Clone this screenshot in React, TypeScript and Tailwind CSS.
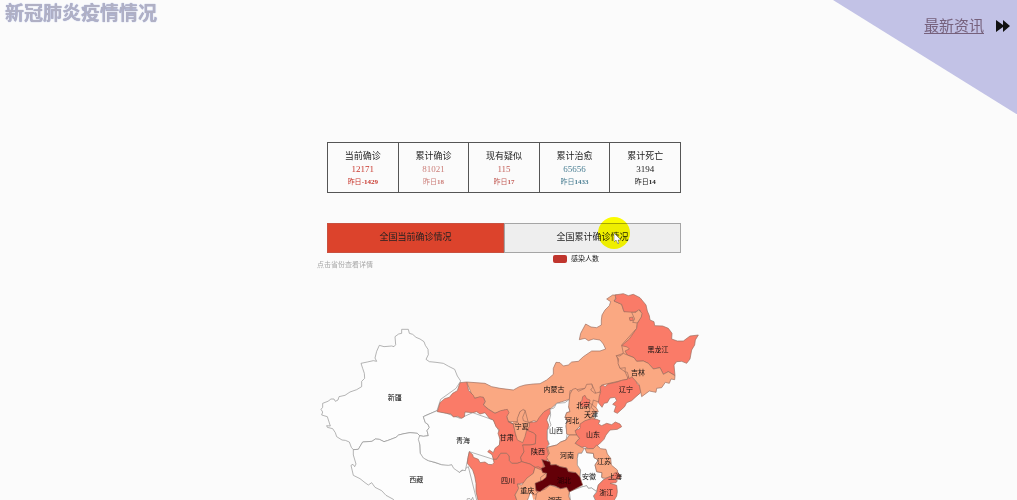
import { useState } from 'react';

const stats = [
  { label: '当前确诊', value: '12171', diff: '-1429', color: 'text-[#c8372d]' },
  { label: '累计确诊', value: '81021', diff: '18', color: 'text-[#cc7f7a]' },
  { label: '现有疑似', value: '115', diff: '17', color: 'text-[#c4605a]' },
  { label: '累计治愈', value: '65656', diff: '1433', color: 'text-[#4f8296]' },
  { label: '累计死亡', value: '3194', diff: '14', color: 'text-[#222222]' },
];

const tabs = ['全国当前确诊情况', '全国累计确诊情况'];

const NONE = '#fdfdfd';
const LOW = '#faa882';
const MID = '#fa7b68';
const HIGH = '#640008';

// Filled first, so that no background shows between neighbouring provinces
const underlay = [
  { fill: LOW, d: 'M1835 1045L1905 985 1950 1090 1905 1145 1810 1155Z' },
  { fill: LOW, d: 'M1705 1175L1775 1155 1810 1158 1798 1190 1785 1240 1740 1270 1700 1262Z' },
  { fill: LOW, d: 'M1635 1340L1745 1345 1740 1420 1650 1400Z' },
  { fill: LOW, d: 'M1535 1225L1590 1225 1600 1280 1540 1290Z' },
  { fill: MID, d: 'M1540 1300L1585 1268 1640 1270 1640 1390 1625 1425 1585 1450 1540 1400Z' },
  { fill: LOW, d: 'M1610 1412L1640 1410 1640 1440 1650 1480 1600 1500 1590 1460Z' },
];

// Outlines come in four map sheets, each with its own origin
const west = [
  {
    fill: NONE,
    d: 'M275 28H295L298 40 308 43 318 52 330 57 342 65 346 76 354 88 355 104 348 118 358 125 378 127 400 130 416 139 434 148 442 168 452 183 438 205 392 238 381 272 350 285 340 290 346 308 353 312 358 322 351 332 355 347 340 349 329 347 322 340 300 338 282 341 266 345 258 352 232 362 222 365 208 358 196 357 186 364 158 366 145 388 130 389 124 382 118 366 106 361 96 360 80 350 76 338 68 326 52 322 50 317 61 318 52 290 35 285 38 276 33 268 38 262 38 250 56 243 62 237 72 237 76 244 84 240 87 230 105 226 120 216 140 209 155 200 155 184 164 175 163 160 158 145 153 130 172 126 190 122 200 124 195 114 200 94 208 76 222 80 245 78 252 80 257 74 255 50 266 42 275 40Z',
  },
  {
    fill: NONE,
    d: 'M130 389L145 388 158 366 186 364 196 357 208 358 222 365 232 362 258 352 266 345 282 341 300 338 322 340 329 347 330 378 331 400 350 420 395 434 425 434 448 457 475 440 505 560H270L250 538 228 526 215 512 195 502 185 488 175 495 165 488 150 476 130 466 123 436 129 433 134 440 138 432 130 405Z',
  },
];

const north = [
  {
    fill: LOW,
    d: 'M1400 1146L1455 1150 1475 1160 1500 1165 1540 1170 1558 1160 1575 1155 1600 1152 1620 1151 1640 1140 1660 1123 1660 1105 1668 1087 1680 1088 1690 1098 1705 1095 1715 1086 1735 1084 1750 1070 1775 1053 1800 1053 1817 1047 1810 1032 1800 1020 1780 1017 1765 1022 1755 1015 1738 1019 1742 1000 1757 972 1773 981 1790 983 1804 975 1804 960 1806 945 1815 930 1828 917 1832 905 1820 897 1838 885H1852L1842 903 1865 913 1872 935 1920 930 1922 950 1912 970 1910 985 1865 1035 1870 1060 1850 1067 1860 1105 1875 1115 1885 1137 1805 1155 1800 1175 1790 1185 1775 1152 1755 1165 1710 1172 1708 1198 1670 1210 1650 1228 1635 1240 1625 1257 1610 1265 1602 1262 1585 1268 1575 1230 1560 1235 1552 1265 1525 1265 1515 1230 1485 1240 1465 1227 1450 1215 1456 1205 1450 1192 1420 1195Z',
  },
  {
    fill: NONE,
    d: 'M1311 1232L1270 1250 1276 1268 1283 1272 1288 1282 1281 1292 1285 1307 1270 1309 1259 1307 1255 1318 1260 1335 1261 1360 1270 1374 1285 1382 1305 1387 1325 1394 1345 1396 1355 1394 1361 1405 1378 1417 1386 1410 1396 1412 1408 1355 1480 1378 1500 1335 1500 1300 1480 1260 1418 1238 1380 1255 1340 1240Z',
  },
];

const central = [
  {
    fill: MID,
    d: 'M22 125L30 98 44 86 58 82 68 70 82 62 90 38 110 36 116 62 130 76 134 85 150 80 160 82 165 94 160 105 175 118 195 130 212 122 232 118 237 128 230 140 235 155 250 162 254 180 258 200 280 205 285 180 296 182 310 188 318 195 316 222 300 225 278 225 284 235 282 245 272 262 275 275 262 280 245 280 238 272 237 258 230 250 212 250 200 268 190 268 186 254 173 245 178 240 190 248 195 235 208 225 210 208 204 190 208 180 198 170 190 150 178 145 165 128 150 132 140 125 128 128 105 126 103 140 95 145 82 139 70 141 63 132 50 130Z',
  },
  {
    fill: MID,
    d: 'M360 115L367 120 355 138 350 150 356 165 352 185 352 208 358 225 350 235 355 252 362 268 338 272 340 285 338 298 325 290 315 292 300 282 275 275 272 262 282 245 278 225 300 225 316 222 318 195 310 188 290 180 298 158 320 155 328 142 342 125Z',
  },
  {
    fill: LOW,
    d: 'M235 155L250 162 262 158 262 145 270 125 280 118 285 125 278 142 280 152 298 158 298 170 290 180 285 200 278 218 262 210 256 190 250 162Z',
  },
  {
    fill: MID,
    d: 'M118 245L128 254 130 262 145 268 150 278 165 276 175 283 186 284 192 278 190 268 200 268 212 250 230 250 237 258 238 272 245 280 262 280 275 275 300 282 315 292 310 310 300 320 290 325 285 338 262 342 266 355 255 375 262 395H145L138 365 138 340 134 318 128 300 112 280 114 262Z',
  },
  {
    fill: LOW,
    d: 'M315 292L335 300 345 300 348 310 332 322 332 335 320 340 318 362 325 370 312 375 300 368 296 382 290 395H262L255 375 266 355 262 342 275 345 290 325 310 310Z',
  },
  { fill: NONE, d: 'M110 395L112 386 120 386 124 390 128 382 132 395Z' },
];

const east = [
  {
    fill: NONE,
    d: 'M118 88L105 98 80 100 72 114 60 118 62 135 58 150 63 165 52 180 52 208 58 222 50 232 80 225 92 216 108 210 112 190 108 170 112 152 105 142 110 128 120 125 116 110 122 102Z',
  },
  {
    fill: LOW,
    d: 'M118 88L120 72 128 58 138 55 145 64 165 55 170 43 185 42 188 52 182 60 195 70 210 66 215 84 208 97 190 90 187 105 200 115 205 125 185 130 195 148 175 150 158 158 150 168 138 180 140 195 118 195 110 192 108 165 112 152 105 142 110 128 120 125 116 110Z',
  },
  { fill: MID, d: 'M148 98L156 92 158 80 165 76 170 86 180 90 178 102 170 112 155 110Z' },
  { fill: LOW, d: 'M178 100L186 103 184 113 192 120 190 135 180 145 175 132 180 115Z' },
  {
    fill: MID,
    d: 'M208 78L212 65 210 50 220 45 225 50 235 42 262 36 275 31 292 28 295 20 305 20 318 32 322 42 330 48 332 68 318 80 305 92 290 98 284 110 262 130 252 125 258 108 248 103 260 92 255 82 240 84 232 98 222 100 216 112 205 98Z',
  },
  {
    fill: MID,
    d: 'M140 195L135 182 150 175 150 162 165 152 185 146 200 148 210 152 205 162 215 167 230 160 245 164 256 156 270 162 275 170 262 178 240 180 228 195 222 208 208 222 190 236 175 236 165 230 155 232 135 220 148 205Z',
  },
  {
    fill: LOW,
    d: 'M52 232L80 225 92 216 108 210 118 195 140 195 148 205 135 220 155 232 165 236 155 250 145 250 142 265 145 285 152 290 152 300 150 322 138 308 115 305 110 294 90 290 78 284 62 285 50 262 58 250Z',
  },
  {
    fill: NONE,
    d: 'M145 250L155 250 163 235 175 238 170 248 190 250 192 263 205 270 195 285 200 305 216 308 215 322 222 328 205 345 200 365 185 354 175 355 170 347 158 352 150 338 150 322 152 300 142 285 142 265Z',
  },
  {
    fill: LOW,
    d: 'M165 236L175 236 190 236 200 225 212 236 228 238 232 252 242 265 244 285 262 300 264 312 255 325 240 320 225 325 215 322 216 308 200 305 195 285 205 270 192 263 190 250 170 248Z',
  },
  { fill: MID, d: 'M245 322L252 310 262 306 272 318 268 328 252 328Z' },
  {
    fill: MID,
    d: 'M222 328L240 320 262 332 258 338 240 340 260 346 262 365 260 378 250 395H198L190 378 200 365 205 345Z',
  },
  {
    fill: NONE,
    d: 'M118 365L130 360 158 350 170 347 175 355 185 354 200 365 190 378 198 395H122Z',
  },
  { fill: LOW, d: 'M15 395L20 370 30 362 45 358 60 345 75 350 92 356 110 352 118 365 116 378 122 395Z' },
  {
    fill: HIGH,
    d: 'M35 268L48 272 60 275 62 285 78 284 90 290 110 294 115 305 138 308 150 322 158 345 130 360 118 366 110 352 92 356 75 348 60 345 45 354 30 365 18 362 15 340 38 330 48 322 50 310 38 308 33 295 45 290Z',
  },
];

const northeast = [
  {
    fill: MID,
    d: 'M222 48L228 42 225 30 250 26 265 32 280 28 300 38 318 60 322 78 328 92 330 105 342 110 344 122 368 123 385 130 396 145 395 162 412 168 430 168 450 153 475 150 466 165 464 180 455 195 450 222 440 235 425 229 410 230 402 240 405 272 385 260 370 268 360 248 340 252 325 235 310 228 290 229 282 218 262 210 255 198 268 192 262 186 245 182 268 162 290 130 292 115 305 90 300 75 282 82 252 80 245 58Z',
  },
  { fill: LOW, d: 'M275 82L288 82 296 74 306 85 304 96 292 114 278 112 284 102Z' },
  { fill: MID, d: 'M268 98L278 96 280 106 270 107Z' },
  {
    fill: LOW,
    d: 'M250 205L262 210 282 218 290 229 310 228 325 235 340 252 360 248 370 268 385 260 405 272 404 284 393 282 388 295 376 292 365 308 350 310 348 322 328 318 305 335 298 300 275 275 268 282 262 262 255 260 256 248 240 250 234 235 236 222 228 212 240 213Z',
  },
];

const sheets = [
  { origin: 'translate(930 960)', shapes: west },
  { origin: 'translate(0 0)', shapes: north },
  { origin: 'translate(1290 1110)', shapes: central },
  { origin: 'translate(1590 1110)', shapes: east },
  { origin: 'translate(1620 855)', shapes: northeast },
];

const labels = [
  { name: '黑龙江', x: 1974, y: 1047 },
  { name: '吉林', x: 1914, y: 1117 },
  { name: '辽宁', x: 1878, y: 1169 },
  { name: '内蒙古', x: 1662, y: 1169 },
  { name: '北京', x: 1750, y: 1216 },
  { name: '天津', x: 1773, y: 1242 },
  { name: '河北', x: 1716, y: 1260 },
  { name: '山西', x: 1668, y: 1290 },
  { name: '山东', x: 1779, y: 1304 },
  { name: '宁夏', x: 1565, y: 1280 },
  { name: '甘肃', x: 1520, y: 1311 },
  { name: '陕西', x: 1614, y: 1353 },
  { name: '河南', x: 1701, y: 1367 },
  { name: '江苏', x: 1812, y: 1383 },
  { name: '上海', x: 1845, y: 1428 },
  { name: '安徽', x: 1767, y: 1428 },
  { name: '浙江', x: 1819, y: 1477 },
  { name: '湖北', x: 1692, y: 1442 },
  { name: '湖南', x: 1665, y: 1501 },
  { name: '四川', x: 1524, y: 1442 },
  { name: '重庆', x: 1582, y: 1471 },
  { name: '青海', x: 1389, y: 1320 },
  { name: '西藏', x: 1249, y: 1437 },
  { name: '新疆', x: 1184, y: 1193 },
];

function ChinaMap() {
  return (
    <svg
      viewBox="927 855 1197 645"
      className="block w-full"
      role="img"
      aria-label="感染人数"
    >
      {underlay.map((patch) => (
        <path key={patch.d} d={patch.d} fill={patch.fill} />
      ))}
      {sheets.map((sheet) => (
        <g key={sheet.origin} transform={sheet.origin}>
          {sheet.shapes.map((shape) => (
            <path
              key={shape.d}
              d={shape.d}
              fill={shape.fill}
              stroke={shape.fill === NONE ? '#8f8f8f' : '#9a6b5c'}
              strokeWidth={2}
              strokeLinejoin="round"
            />
          ))}
        </g>
      ))}
      {labels.map((label) => (
        <text
          key={label.name}
          x={label.x}
          y={label.y + 8}
          textAnchor="middle"
          fontSize={21}
          fill={label.name === '湖北' ? '#2a0003' : '#111111'}
        >
          {label.name}
        </text>
      ))}
    </svg>
  );
}

export default function App() {
  const [active, setActive] = useState(0);

  return (
    <div className="relative min-h-screen overflow-hidden bg-[#fbfbfb] font-['Liberation_Serif','Noto_Sans_CJK_SC',serif] text-[#222222]">
      {/* Corner ribbon */}
      <svg
        viewBox="0 0 185 115"
        className="absolute top-0 right-0 w-46"
        aria-hidden="true"
      >
        <path d="M0 0H185V115Z" fill="#c2c2e6" />
      </svg>

      <header className="relative flex items-start justify-between pt-px pr-[7px] pl-[5px]">
        <h1 className="text-[19px] leading-[26px] font-bold text-[#b0b0c4] [text-shadow:0_0_1px_#7f8fd0]">
          新冠肺炎疫情情况
        </h1>
        <a
          href="#news"
          className="mt-[15px] flex items-center gap-3 text-[15px] leading-5 text-[#76617c]"
        >
          <span className="underline underline-offset-2">最新资讯</span>
          <svg viewBox="0 0 14 12" className="w-3.5" aria-hidden="true">
            <path d="M0 0L7 5V0L14 6 7 12V7L0 12Z" fill="#111111" />
          </svg>
        </a>
      </header>

      <main className="mx-auto mt-[106px] w-[399px] max-w-full">
        <div className="pr-[27px] pl-[18px]">
          <table className="w-full table-fixed border-collapse text-center">
            <tbody>
              <tr>
                {stats.map((stat) => (
                  <td key={stat.label} className="border border-[#555555] pt-[7px] pb-1">
                    <div className="text-[9px] leading-[13px]">{stat.label}</div>
                    <div className={`text-[9px] leading-[13px] ${stat.color}`}>{stat.value}</div>
                    <div className={`text-[7px] leading-[12px] font-bold ${stat.color}`}>
                      <span className="font-normal">昨日</span>
                      {stat.diff}
                    </div>
                  </td>
                ))}
              </tr>
            </tbody>
          </table>

          {/* Tabs */}
          <div className="relative mt-[30px] flex">
            {tabs.map((tab, i) => (
              <button
                key={tab}
                type="button"
                onClick={() => setActive(i)}
                className={`h-[30px] flex-1 border text-[9px] ${
                  active === i ? 'border-[#c9503f] bg-[#dc432c]' : 'border-[#a5a5a5] bg-[#eeeeee]'
                }`}
              >
                {tab}
              </button>
            ))}
            <div className="pointer-events-none absolute -top-1.5 right-[51px] size-8 rounded-full bg-[#ffff00] mix-blend-multiply" />
            <svg
              viewBox="0 0 8 11"
              className="pointer-events-none absolute top-2.5 right-[59px] w-2"
              aria-hidden="true"
            >
              <path d="M0 0V9L2 7 4 11 5 10 4 7H7Z" fill="#ffffff" stroke="#555555" strokeWidth="0.5" />
            </svg>
          </div>
        </div>

        {/* Legend */}
        <div className="flex items-start px-2 text-[7px] leading-[12px]">
          <p className="mt-1.5 text-[#a8a8a8]">点击省份查看详情</p>
          <div className="mr-[101px] ml-auto flex items-center gap-1">
            <span className="h-2 w-3.5 rounded-xs bg-[#c0352d]" />
            <span>感染人数</span>
          </div>
        </div>

        <div className="mt-3.5">
          <ChinaMap />
        </div>
      </main>
    </div>
  );
}
